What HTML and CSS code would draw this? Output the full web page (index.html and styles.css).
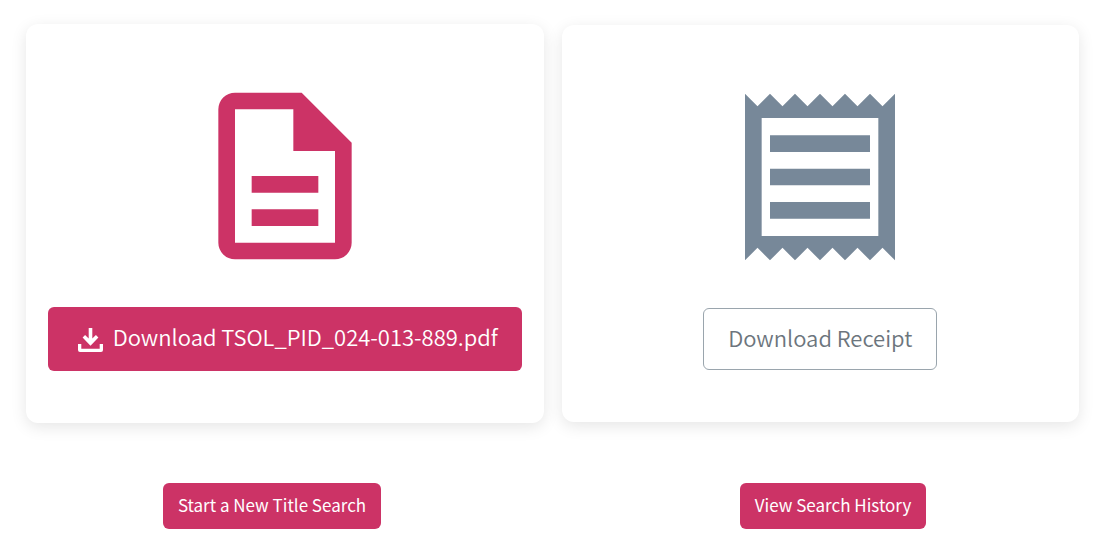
FILE: index.html
```html
<!DOCTYPE html>
<html lang="en">
<head>
	<meta charset="utf-8" />
	<meta name="viewport" content="width=device-width, initial-scale=1.0" />
	<title>Title Search</title>
	<link rel="stylesheet" href="styles.css">
</head>

<body>
	<main>
		<div class="cards">
			<section class="card">
				<svg class="card-icon document" viewBox="0 0 24 24" aria-hidden="true">
					<path fill-rule="evenodd" d="M6 2h8l6 6v12a2 2 0 0 1-2 2H6a2 2 0 0 1-2-2V4a2 2 0 0 1 2-2zM6 4v16h12V9h-5V4zM8 12h8v2H8zM8 16h8v2H8z" />
				</svg>
				<button type="button" class="btn btn-large btn-primary">
					<svg class="btn-icon" viewBox="0 0 25 24" aria-hidden="true">
						<path d="M10.700 0h3.600v10.500l3.600-3.600 2.500 2.500-7.900 8.300-7.900-8.300 2.500-2.500 3.600 3.600z" />
						<path d="M0 16h3.300v4.700h18.400V16H25v6a2 2 0 0 1-2 2H2a2 2 0 0 1-2-2z" />
					</svg>
					Download TSOL_PID_024-013-889.pdf
				</button>
			</section>

			<section class="card">
				<svg class="card-icon receipt" viewBox="0 0 24 24" aria-hidden="true">
					<path fill-rule="evenodd" d="M3 2l1.500 1.500L6 2l1.500 1.500L9 2l1.500 1.500L12 2l1.500 1.500L15 2l1.500 1.500L18 2l1.500 1.500L21 2v20l-1.500-1.500L18 22l-1.500-1.500L15 22l-1.500-1.500L12 22l-1.500-1.500L9 22l-1.500-1.500L6 22l-1.500-1.500L3 22zM5 4.910v14.180h14V4.910zM6 7h12v2H6zM6 11h12v2H6zM6 15h12v2H6z" />
				</svg>
				<button type="button" class="btn btn-large btn-outline">Download Receipt</button>
			</section>
		</div>

		<div class="actions">
			<a class="btn btn-primary" href="#">Start a New Title Search</a>
			<a class="btn btn-primary" href="#">View Search History</a>
		</div>
	</main>
</body>
</html>
```

FILE: styles.css
```css
body {
	margin: 0;
	padding: 24px 16px 24px 26px;
	background: #fff;
	font-family: 'Noto Sans CJK SC', 'Open Sans', sans-serif;
	color: #212529;
}
.cards {
	display: grid;
	grid-template-columns: 1fr 1fr;
	align-items: center;
	gap: 18px;
}
.card {
	display: flex;
	flex-direction: column;
	align-items: center;
	gap: 31px;
	padding: 52px 16px;
	border-radius: 12px;
	background: #fff;
	box-shadow: 0 4px 16px rgba(0, 0, 0, 0.1);
}
.card-icon {
	width: 200px;
	height: 200px;
}
.document {
	fill: #cc3366;
}
.receipt {
	fill: #778899;
}

/* buttons */
.btn {
	display: inline-flex;
	align-items: center;
	justify-content: center;
	box-sizing: border-box;
	padding: 10px 15px 12px;
	border: 0;
	border-radius: 6px;
	font-family: inherit;
	font-size: 17px;
	line-height: 24px;
	text-decoration: none;
	cursor: pointer;
}
.btn-large {
	font-size: 22px;
	font-weight: 350;
	line-height: 36px;
}
.btn-primary {
	background: #cc3366;
	color: #fff;
}
.btn-large.btn-primary {
	gap: 10px;
	padding: 11px 24px 17px 30px;
}
.btn-outline {
	padding: 10px 24px 14px;
	border: 1px solid #9aa5ad;
	background: #fff;
	color: #6c757d;
}
.btn-icon {
	width: 25px;
	height: 24px;
	margin-top: 7px;
	fill: #fff;
}

.actions {
	display: flex;
	flex-wrap: wrap;
	justify-content: space-between;
	gap: 16px;
	margin-top: 60px;
	padding: 0 14.5% 0 13%;
}
```
